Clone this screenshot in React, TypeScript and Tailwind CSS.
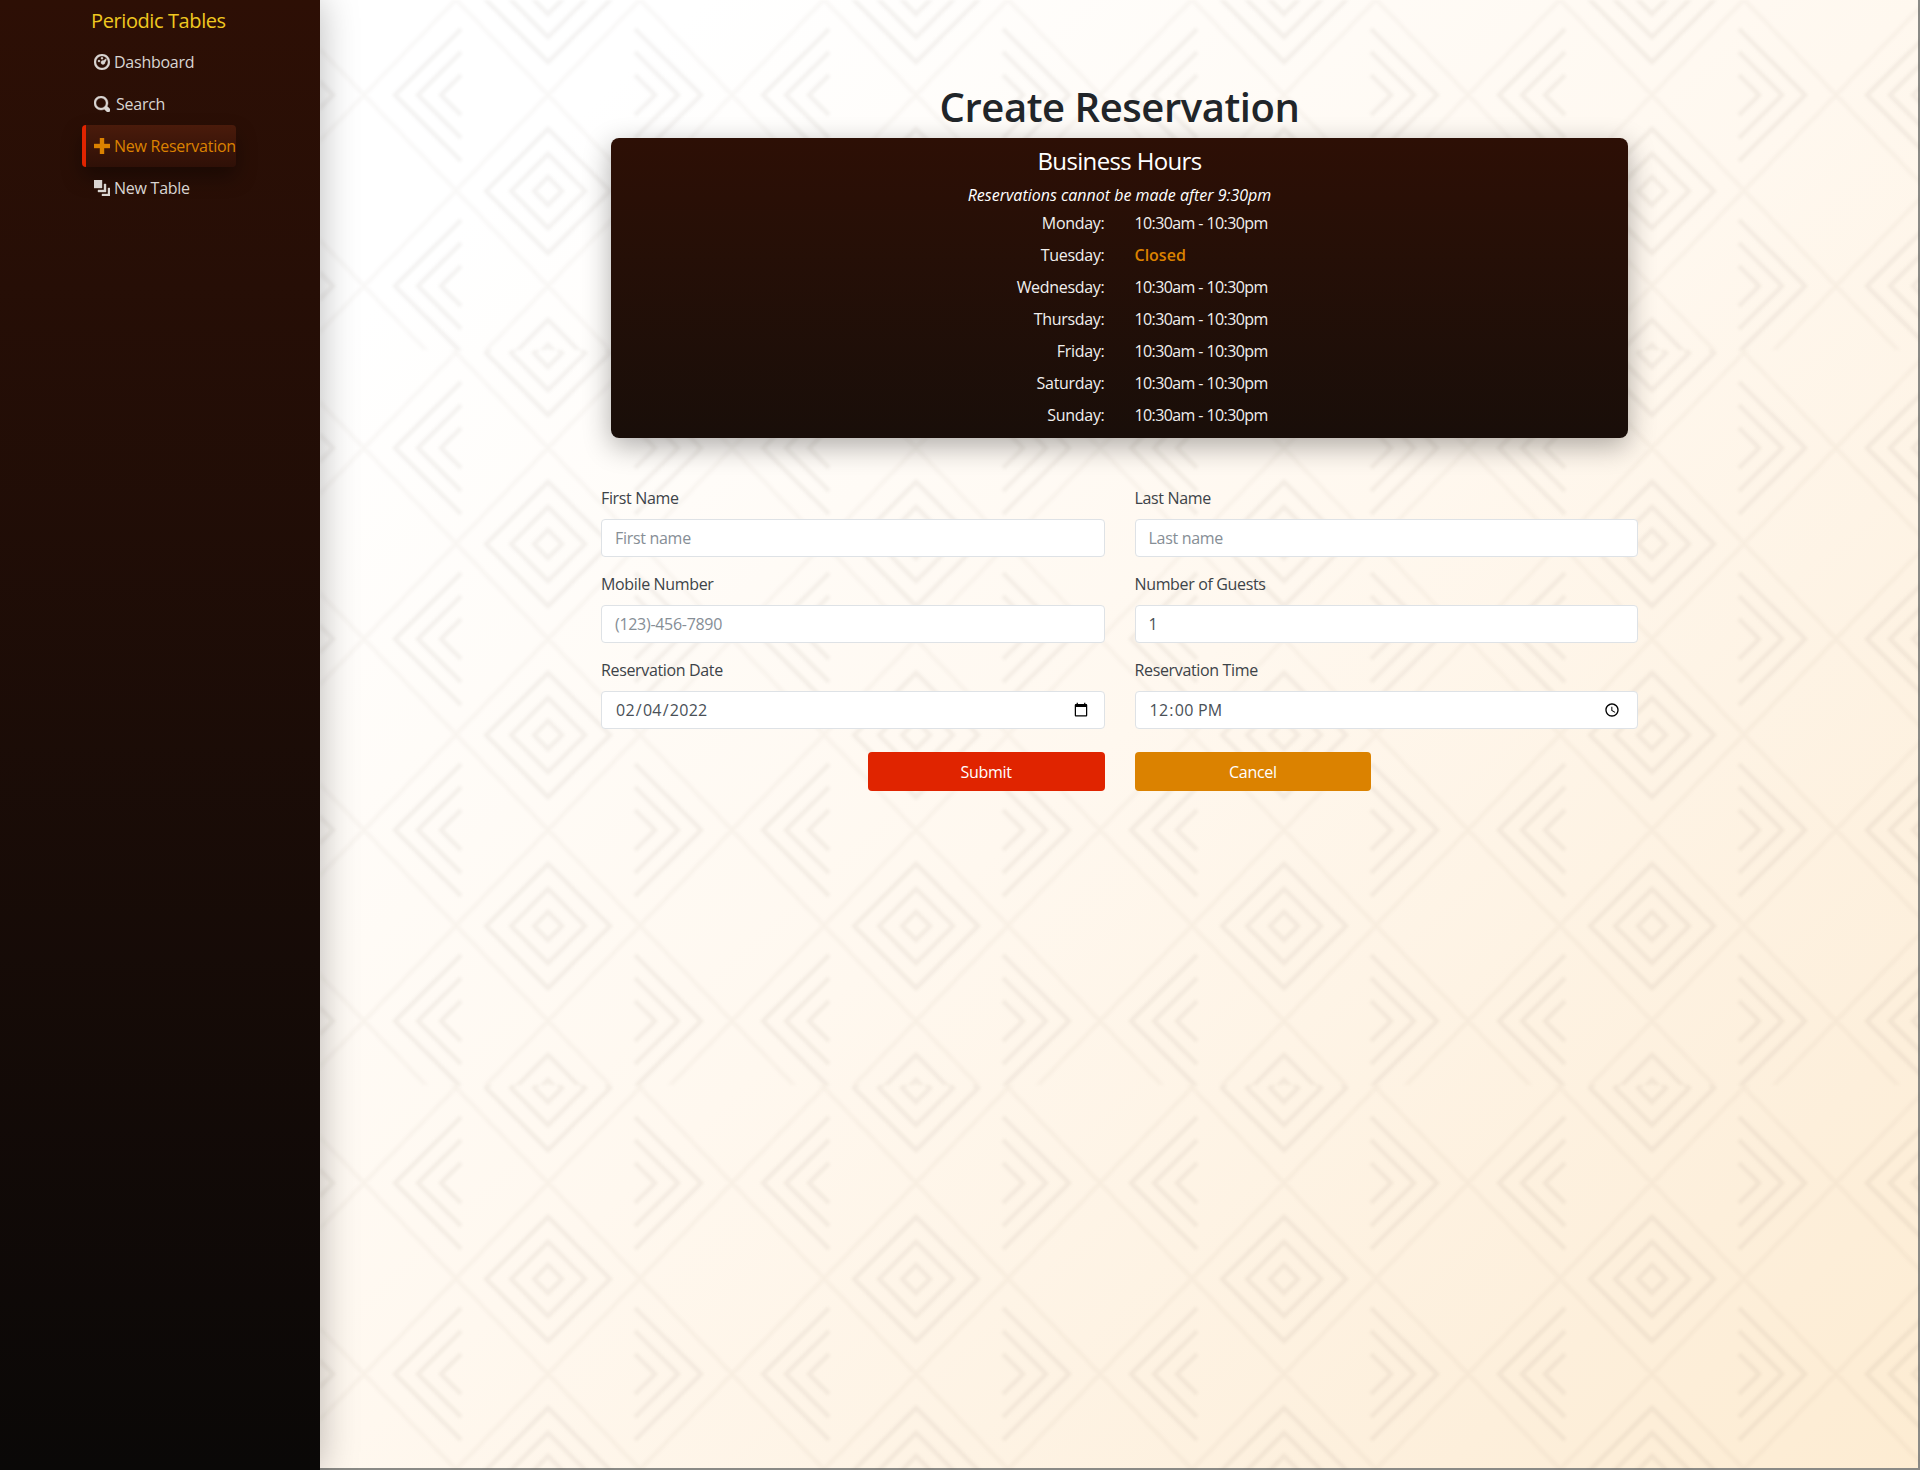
import { useMemo } from "react";

const HOURS = [
  ["Monday:", "10:30am - 10:30pm"],
  ["Tuesday:", "Closed"],
  ["Wednesday:", "10:30am - 10:30pm"],
  ["Thursday:", "10:30am - 10:30pm"],
  ["Friday:", "10:30am - 10:30pm"],
  ["Saturday:", "10:30am - 10:30pm"],
  ["Sunday:", "10:30am - 10:30pm"],
];

const ICONS = {
  dashboard:
    "M4 0c-2.2 0-4 1.8-4 4s1.8 4 4 4 4-1.8 4-4-1.8-4-4-4zm0 1c1.66 0 3 1.34 3 3s-1.34 3-3 3-3-1.34-3-3 1.34-3 3-3zm0 .6c-.3 0-.5.2-.5.5s.2.5.5.5.5-.2.5-.5-.2-.5-.5-.5zm-1.5 1.4c-.3 0-.5.2-.5.5s.2.5.5.5.5-.2.5-.5-.2-.5-.5-.5zm3.5-.6l-1.2.9c-.1 0-.2-.1-.3-.1-.6 0-1 .4-1 1s.4 1 1 1 1-.4 1-1l.7-1.3-.2-.5z",
  search:
    "M3.5 0c-1.93 0-3.5 1.57-3.5 3.5s1.57 3.5 3.5 3.5c.59 0 1.17-.14 1.66-.41a1 1 0 0 0 .13.13l1 1a1.02 1.02 0 1 0 1.44-1.44l-1-1a1 1 0 0 0-.16-.13c.27-.49.44-1.06.44-1.66 0-1.93-1.57-3.5-3.5-3.5zm0 1c1.39 0 2.5 1.11 2.5 2.5 0 .66-.24 1.27-.66 1.72l-.03.03a1 1 0 0 0-.13.13c-.44.4-1.04.63-1.69.63-1.39 0-2.5-1.11-2.5-2.5s1.11-2.5 2.5-2.5z",
  plus: "M3 0v3h-3v2h3v3h2v-3h3v-2h-3v-3h-2z",
  layers: "M0 0v4h4v-4h-4zm5 2v3h-3v1h4v-4h-1zm2 2v3h-3v1h4v-4h-1z",
};

function Icon({ d }: { d: string }) {
  return (
    <svg viewBox="0 0 8 8" className="w-4 h-4 shrink-0 fill-current stroke-current stroke-[0.2]">
      <path d={d} />
    </svg>
  );
}

function NavItem({ icon, label, active, gap }: { icon: string; label: string; active?: boolean; gap: string }) {
  return (
    <a
      className={
        active
          ? "flex items-center w-fit h-[42px] pl-2 border-l-4 border-[#e02400] rounded-[4px] bg-gradient-to-b from-[#4a1b0b] to-[#2f1007] text-[#db8200] shadow-[0_10px_20px_rgba(0,0,0,0.35)] whitespace-nowrap"
          : "flex items-center w-fit h-[42px] pl-2 border-l-4 border-transparent text-[#d9d5d2] whitespace-nowrap"
      }
    >
      <Icon d={icon} />
      <span className={gap}>{label}</span>
    </a>
  );
}

function Field({ label, children }: { label: string; children: React.ReactNode }) {
  return (
    <div className="mb-[15px]">
      <label className="block mb-[9px] leading-6 text-[#3d4348] tracking-[-0.35px]">{label}</label>
      {children}
    </div>
  );
}

const INPUT =
  "block w-full h-[38px] px-[13px] bg-white border border-[#dee2e6] rounded-[4px] text-[#495057] placeholder:text-[#868e96] outline-none tracking-[-0.3px]";
const INPUT_DATE =
  "block w-full h-[38px] px-[13px] bg-white border border-[#dee2e6] rounded-[4px] text-[#495057] outline-none tracking-[0.25px]";

// background tile: overlapping diamonds, cut at the tile seam like the original image
function Backdrop() {
  const { lattice, rings, chevrons } = useMemo(() => {
    let lattice = "";
    let rings = "";
    let chevrons = "";
    for (let k = -1; k <= 4; k++) {
      const cy = 98 + 191 * k;
      lattice += `M0 ${cy}L184 ${cy - 191}L368 ${cy}L184 ${cy + 191}Z`;
      for (const hw of [153, 130, 107]) {
        const h = hw - 87;
        chevrons += `M97 ${cy - h}L${184 - hw} ${cy}L97 ${cy + h}`;
        chevrons += `M271 ${cy - h}L${184 + hw} ${cy}L271 ${cy + h}`;
      }
    }
    for (let k = 0; k <= 4; k++) {
      const cy = 3 + 191 * k;
      for (const hw of [62, 37, 14]) {
        rings += `M${184 - hw} ${cy}L184 ${cy - hw}L${184 + hw} ${cy}L184 ${cy + hw}Z`;
      }
    }
    return { lattice, rings, chevrons };
  }, []);

  return (
    <svg className="absolute inset-0 w-full h-full blur-[1.5px]">
      <defs>
        <pattern id="diamonds" patternUnits="userSpaceOnUse" width="368" height="735" patternTransform="translate(44 350)">
          <path d={lattice} fill="none" stroke="#5a4a3c" strokeOpacity="0.04" strokeWidth="4" />
          <path d={chevrons} fill="none" stroke="#5a4a3c" strokeOpacity="0.065" strokeWidth="4.5" />
          <path d={rings} fill="none" stroke="#5a4a3c" strokeOpacity="0.065" strokeWidth="4.5" />
        </pattern>
      </defs>
      <rect width="100%" height="100%" fill="url(#diamonds)" />
    </svg>
  );
}

export default function App() {
  return (
    <div className="flex h-[1470px] overflow-hidden text-base font-['Open_Sans',sans-serif]">
      <aside className="relative z-10 w-[320px] shrink-0 bg-gradient-to-b from-[#2d0f05] to-[#0a0807] shadow-[0_0_36px_rgba(0,0,0,0.28)]">
        <div className="h-[41px] pl-[91px] flex items-center text-xl text-[#f0c820] tracking-[-0.4px]">Periodic Tables</div>
        <nav className="ml-[82px] flex flex-col tracking-[-0.25px]">
          <NavItem icon={ICONS.dashboard} label="Dashboard" gap="ml-1" />
          <NavItem icon={ICONS.search} label="Search" gap="ml-1.5" />
          <NavItem icon={ICONS.plus} label="New Reservation" gap="ml-1" active />
          <NavItem icon={ICONS.layers} label="New Table" gap="ml-1" />
        </nav>
      </aside>

      <main className="relative flex-1 pr-px shadow-[inset_-2px_-2px_0_#8a8a86] bg-[linear-gradient(to_bottom_right,#ffffff_12%,#fff8ef_50%,#fdefdb_85%,#fdecd2_100%)]">
        <Backdrop />
        <div className="relative w-[1037px] mx-auto pt-[83px]">
          <h1 className="text-center text-[40px] leading-[48px] font-semibold text-[#212529] tracking-[-0.45px]">Create Reservation</h1>

          <section className="h-[300px] mx-[10px] mt-[7px] mb-12 p-2 rounded-lg bg-gradient-to-b from-[#2d0f05] to-[#190e09] text-white shadow-[0_8px_28px_rgba(0,0,0,0.32)]">
            <h4 className="text-center text-2xl leading-[29px] mb-2 tracking-[-0.65px]">Business Hours</h4>
            <p className="text-center italic leading-6">Reservations cannot be made after 9:30pm</p>
            <div className="grid grid-cols-2 gap-x-[30px] text-[#f1efee]">
              {HOURS.map(([day, time]) => (
                <div key={day} className="contents">
                  <div className="h-8 py-1 leading-6 text-right tracking-[-0.3px]">{day}</div>
                  <div className={time === "Closed" ? "h-8 py-1 leading-6 font-semibold text-[#db8200] tracking-[0px]" : "h-8 py-1 leading-6 tracking-[-0.6px]"}>{time}</div>
                </div>
              ))}
            </div>
          </section>

          <form>
            <div className="grid grid-cols-2 gap-x-[30px]">
              <Field label="First Name"><input className={INPUT} placeholder="First name" /></Field>
              <Field label="Last Name"><input className={INPUT} placeholder="Last name" /></Field>
              <Field label="Mobile Number"><input className={INPUT} placeholder="(123)-456-7890" /></Field>
              <Field label="Number of Guests"><input className={INPUT} type="number" defaultValue={1} /></Field>
              <Field label="Reservation Date"><input className={INPUT_DATE} type="date" defaultValue="2022-02-04" /></Field>
              <Field label="Reservation Time"><input className={INPUT_DATE} type="time" defaultValue="12:00" /></Field>
            </div>
            <div className="grid grid-cols-4 gap-x-[30px] mt-2">
              <button type="button" className="col-start-2 h-[39px] rounded-[4px] bg-[#e02400] text-white tracking-[-0.3px]">Submit</button>
              <button type="button" className="h-[39px] rounded-[4px] bg-[#db8200] text-white tracking-[-0.3px]">Cancel</button>
            </div>
          </form>
        </div>
      </main>
    </div>
  );
}
